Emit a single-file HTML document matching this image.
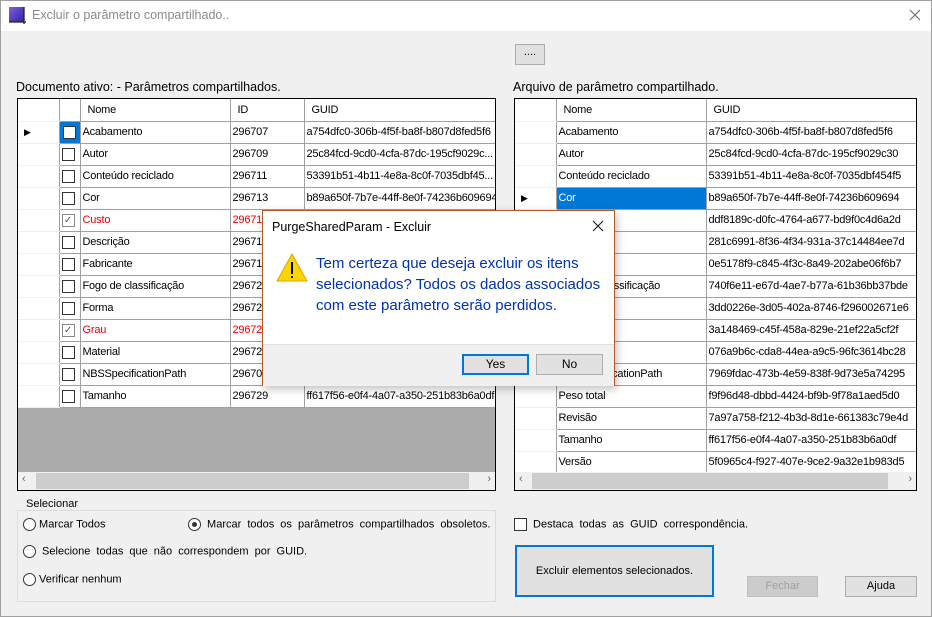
<!DOCTYPE html>
<html><head><meta charset="utf-8"><style>
*{box-sizing:border-box;margin:0;padding:0}
body{width:932px;height:617px;overflow:hidden;background:#f0f0f0;font-family:"Liberation Sans",sans-serif;font-size:11px;color:#000;position:relative}
.a{position:absolute;white-space:nowrap}
.win{left:0;top:0;width:932px;height:617px;border:1px solid #a0a0a0}
.tb{left:1px;top:1px;width:930px;height:30px;background:#fff}
.grid{border:1px solid #000;background:#ababab;overflow:hidden}
table{border-collapse:collapse;table-layout:fixed;background:#fff}
td{height:22px;border:1px solid #a0a0a0;padding:0 2px;white-space:nowrap;overflow:hidden;font-size:11px;letter-spacing:-0.2px}
td.rh{border-left:none;border-color:#f0f0f0 #a0a0a0 #f0f0f0 #f0f0f0;border-right:1px solid #a0a0a0}
tr.h td{border-top:none;padding-left:7px}
.cb{display:inline-block;width:13px;height:13px;border:1px solid #333;background:#fff;vertical-align:middle;position:relative}
.red{color:#e00}
.sb{height:18px;background:#f0f0f0;position:absolute;left:0;right:0;bottom:0}
.thumb{position:absolute;top:1px;height:16px;background:#cdcdcd}
.btn{position:absolute;background:#e1e1e1;border:1px solid #adadad;text-align:center}
.rad{display:inline-block;width:13px;height:13px;border:1px solid #333;border-radius:50%;background:#fff;vertical-align:middle;position:relative}
.ws{word-spacing:3px}
</style></head><body>
<div class="a win"></div>
<div class="a tb"></div>
<svg class="a" style="left:9px;top:7px" width="17" height="17"><defs><linearGradient id="g" x1="0" y1="0" x2="1" y2="1"><stop offset="0" stop-color="#8060e0"/><stop offset="1" stop-color="#3020a0"/></linearGradient></defs><rect x="0" y="0" width="15" height="15" fill="url(#g)"/><path d="M0 15h17M15 0v17" stroke="#222" stroke-width="1.3"/></svg>
<div class="a" style="left:32px;top:8px;color:#8a8a8a;font-size:12.5px">Excluir o parâmetro compartilhado..</div>
<svg class="a" style="left:909px;top:9px" width="12" height="12"><path d="M1 1L11 11M11 1L1 11" stroke="#666" stroke-width="1"/></svg>

<div class="btn" style="left:515px;top:44px;width:30px;height:21px;line-height:15px">....</div>
<div class="a" style="left:16px;top:80px;font-size:12.5px">Documento ativo: - Parâmetros compartilhados.</div>
<div class="a" style="left:513px;top:80px;font-size:12.5px">Arquivo de parâmetro compartilhado.</div>

<div class="a grid" style="left:17px;top:98px;width:479px;height:393px">
<table style="width:495px">
<colgroup><col style="width:41px"><col style="width:21px"><col style="width:150px"><col style="width:74px"><col style="width:209px"></colgroup>
<tr class="h"><td class="rh"></td><td></td><td>Nome</td><td>ID</td><td>GUID</td></tr>
<tr><td class="rh" style="padding-left:6px;font-size:9px">▶</td><td style="background:#0078d7;padding:0 3px"><span class="cb"></span></td><td>Acabamento</td><td>296707</td><td>a754dfc0-306b-4f5f-ba8f-b807d8fed5f6</td></tr>
<tr><td class="rh"></td><td><span class="cb"></span></td><td>Autor</td><td>296709</td><td>25c84fcd-9cd0-4cfa-87dc-195cf9029c...</td></tr>
<tr><td class="rh"></td><td><span class="cb"></span></td><td>Conteúdo reciclado</td><td>296711</td><td>53391b51-4b11-4e8a-8c0f-7035dbf45...</td></tr>
<tr><td class="rh"></td><td><span class="cb"></span></td><td>Cor</td><td>296713</td><td>b89a650f-7b7e-44ff-8e0f-74236b609694</td></tr>
<tr class="red"><td class="rh"></td><td><span class="cb" style="border-color:#888;color:#555;font-size:10px;line-height:11px;text-align:center">✓</span></td><td>Custo</td><td>296715</td><td>ddf8189c-d0fc-4764-a677-bd9f0c4d6a2d</td></tr>
<tr><td class="rh"></td><td><span class="cb"></span></td><td>Descrição</td><td>296717</td><td>281c6991-8f36-4f34-931a-37c14484ee7d</td></tr>
<tr><td class="rh"></td><td><span class="cb"></span></td><td>Fabricante</td><td>296719</td><td>0e5178f9-c845-4f3c-8a49-202abe06f6b7</td></tr>
<tr><td class="rh"></td><td><span class="cb"></span></td><td>Fogo de classificação</td><td>296721</td><td>740f6e11-e67d-4ae7-b77a-61b36bb37bde</td></tr>
<tr><td class="rh"></td><td><span class="cb"></span></td><td>Forma</td><td>296723</td><td>3dd0226e-3d05-402a-8746-f296002671e6</td></tr>
<tr class="red"><td class="rh"></td><td><span class="cb" style="border-color:#888;color:#555;font-size:10px;line-height:11px;text-align:center">✓</span></td><td>Grau</td><td>296725</td><td>3a148469-c45f-458a-829e-21ef22a5cf2f</td></tr>
<tr><td class="rh"></td><td><span class="cb"></span></td><td>Material</td><td>296727</td><td>076a9b6c-cda8-44ea-a9c5-96fc3614bc28</td></tr>
<tr><td class="rh"></td><td><span class="cb"></span></td><td>NBSSpecificationPath</td><td>296705</td><td>7969fdac-473b-4e59-838f-9d73e5a74295</td></tr>
<tr><td class="rh"></td><td><span class="cb"></span></td><td>Tamanho</td><td>296729</td><td>ff617f56-e0f4-4a07-a350-251b83b6a0df</td></tr>
</table>
<div class="sb"><span class="a" style="left:4px;top:1px;color:#666">‹</span><div class="thumb" style="left:18px;width:433px"></div><span class="a" style="right:4px;top:1px;color:#666">›</span></div>
</div>

<div class="a grid" style="left:514px;top:98px;width:403px;height:393px">
<table style="width:401px">
<colgroup><col style="width:41px"><col style="width:150px"><col style="width:210px"></colgroup>
<tr class="h"><td class="rh"></td><td>Nome</td><td>GUID</td></tr>
<tr><td class="rh"></td><td>Acabamento</td><td>a754dfc0-306b-4f5f-ba8f-b807d8fed5f6</td></tr>
<tr><td class="rh"></td><td>Autor</td><td>25c84fcd-9cd0-4cfa-87dc-195cf9029c30</td></tr>
<tr><td class="rh"></td><td>Conteúdo reciclado</td><td>53391b51-4b11-4e8a-8c0f-7035dbf454f5</td></tr>
<tr><td class="rh" style="padding-left:6px;font-size:9px">▶</td><td style="background:#0078d7;color:#fff">Cor</td><td>b89a650f-7b7e-44ff-8e0f-74236b609694</td></tr>
<tr><td class="rh"></td><td>Custo</td><td>ddf8189c-d0fc-4764-a677-bd9f0c4d6a2d</td></tr>
<tr><td class="rh"></td><td>Descrição</td><td>281c6991-8f36-4f34-931a-37c14484ee7d</td></tr>
<tr><td class="rh"></td><td>Fabricante</td><td>0e5178f9-c845-4f3c-8a49-202abe06f6b7</td></tr>
<tr><td class="rh"></td><td>Fogo de classificação</td><td>740f6e11-e67d-4ae7-b77a-61b36bb37bde</td></tr>
<tr><td class="rh"></td><td>Forma</td><td>3dd0226e-3d05-402a-8746-f296002671e6</td></tr>
<tr><td class="rh"></td><td>Grau</td><td>3a148469-c45f-458a-829e-21ef22a5cf2f</td></tr>
<tr><td class="rh"></td><td>Material</td><td>076a9b6c-cda8-44ea-a9c5-96fc3614bc28</td></tr>
<tr><td class="rh"></td><td>NBSSpecificationPath</td><td>7969fdac-473b-4e59-838f-9d73e5a74295</td></tr>
<tr><td class="rh"></td><td>Peso total</td><td>f9f96d48-dbbd-4424-bf9b-9f78a1aed5d0</td></tr>
<tr><td class="rh"></td><td>Revisão</td><td>7a97a758-f212-4b3d-8d1e-661383c79e4d</td></tr>
<tr><td class="rh"></td><td>Tamanho</td><td>ff617f56-e0f4-4a07-a350-251b83b6a0df</td></tr>
<tr><td class="rh"></td><td>Versão</td><td>5f0965c4-f927-407e-9ce2-9a32e1b983d5</td></tr>
</table>
<div class="sb"><span class="a" style="left:4px;top:1px;color:#666">‹</span><div class="thumb" style="left:17px;width:356px"></div><span class="a" style="right:4px;top:1px;color:#666">›</span></div>
</div>

<div class="a" style="left:17px;top:510px;width:479px;height:92px;border:1px solid #dcdcdc"></div>
<div class="a" style="left:24px;top:498px;background:#f0f0f0;padding:0 2px">Selecionar</div>
<div class="a" style="left:23px;top:518px"><span class="rad"></span> Marcar Todos</div>
<div class="a ws" style="left:188px;top:518px"><span class="rad"><span class="a" style="left:3px;top:3px;width:5px;height:5px;border-radius:50%;background:#333"></span></span> Marcar todos os parâmetros compartilhados obsoletos.</div>
<div class="a ws" style="left:23px;top:545px"><span class="rad"></span> Selecione todas que não correspondem por GUID.</div>
<div class="a" style="left:23px;top:573px"><span class="rad"></span> Verificar nenhum</div>

<div class="a ws" style="left:514px;top:518px"><span class="cb"></span> Destaca todas as GUID correspondência.</div>
<div class="btn" style="left:515px;top:545px;width:199px;height:52px;border:2px solid #0078d7;line-height:48px">Excluir elementos selecionados.</div>
<div class="btn" style="left:747px;top:576px;width:71px;height:21px;line-height:19px;color:#a0a0a0;background:#ccc;border-color:#bfbfbf">Fechar</div>
<div class="btn" style="left:845px;top:576px;width:72px;height:21px;line-height:19px">Ajuda</div>

<div class="a" style="left:262px;top:210px;width:353px;height:176px;background:#fff;border:1px solid #b85a20;box-shadow:2px 3px 8px rgba(0,0,0,.25)">
<div class="a" style="left:9px;top:9px;font-size:12.5px">PurgeSharedParam - Excluir</div>
<svg class="a" style="left:329px;top:9px" width="12" height="12"><path d="M1 1L11 11M11 1L1 11" stroke="#222" stroke-width="1.2"/></svg>
<svg class="a" style="left:12px;top:41px" width="34" height="31"><path d="M17 2L32 29H2Z" fill="#fcd500" stroke="#d9a800"/><path d="M17 10v12" stroke="#000" stroke-width="2"/><rect x="16" y="24" width="2" height="2"/></svg>
<div class="a" style="left:53px;top:42px;color:#0033aa;font-size:15px;line-height:21px;width:300px;white-space:normal">Tem certeza que deseja excluir os itens selecionados? Todos os dados associados com este parâmetro serão perdidos.</div>
<div class="a" style="left:0;top:133px;width:351px;height:42px;background:#f0f0f0;border-top:1px solid #e0e0e0"></div>
<div class="btn" style="left:199px;top:143px;width:67px;height:21px;border:2px solid #0078d7;line-height:17px;font-size:12px">Yes</div>
<div class="btn" style="left:273px;top:143px;width:67px;height:21px;line-height:19px;font-size:12px">No</div>
</div>
</body></html>
